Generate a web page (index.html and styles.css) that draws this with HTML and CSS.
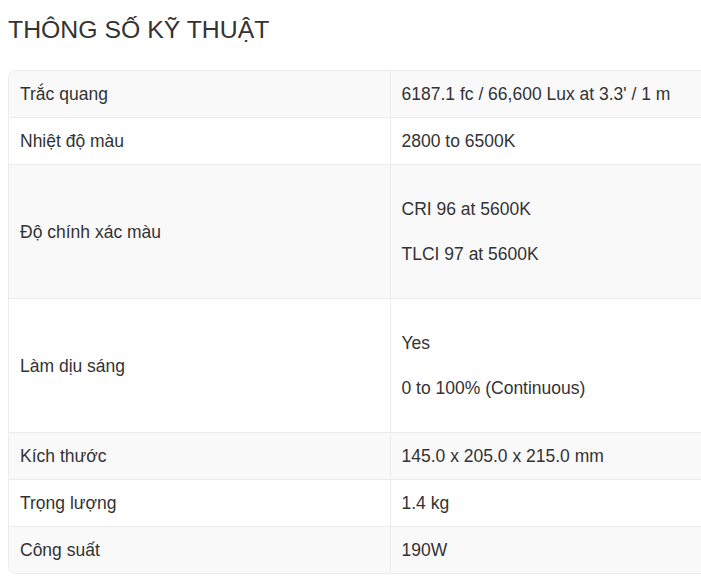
FILE: index.html
```html
<!DOCTYPE html>
<html lang="vi">
<head>
<meta charset="utf-8">
<link rel="stylesheet" href="styles.css">
</head>
<body>
<h2 class="title">THÔNG SỐ KỸ THUẬT</h2>
<table class="specs">
<tbody>
<tr><td>Trắc quang</td><td>6187.1 fc / 66,600 Lux at 3.3' / 1 m</td></tr>
<tr><td>Nhiệt độ màu</td><td>2800 to 6500K</td></tr>
<tr><td>Độ chính xác màu</td><td><p>CRI 96 at 5600K</p><p>TLCI 97 at 5600K</p></td></tr>
<tr><td>Làm dịu sáng</td><td><p>Yes</p><p>0 to 100% (Continuous)</p></td></tr>
<tr><td>Kích thước</td><td>145.0 x 205.0 x 215.0 mm</td></tr>
<tr><td>Trọng lượng</td><td>1.4 kg</td></tr>
<tr><td>Công suất</td><td>190W</td></tr>
</tbody>
</table>
</body>
</html>
```
FILE: styles.css
```css
html { overflow: hidden; }
body {
  margin: 0;
  padding: 16px 8px 0;
  font-family: "Liberation Sans", Arial, sans-serif;
  color: #333;
  background: #fff;
}
.title {
  margin: 0 0 26px;
  font-size: 24.8px;
  font-weight: normal;
  line-height: 28px;
  color: #333;
}
.specs {
  width: 764px;
  border-collapse: separate;
  border-spacing: 0;
  border: 1px solid #ececec;
  border-radius: 8px;
  font-size: 17.5px;
  line-height: 24px;
  table-layout: fixed;
}
.specs td {
  padding: 11px 11px;
  border-top: 1px solid #ececec;
  vertical-align: middle;
  width: 50%;
}
.specs tr:first-child td { border-top: none; }
.specs td + td { border-left: 1px solid #ececec; }
.specs tr:nth-child(odd) td { background: #f9f9fa; }
.specs tr:first-child td:first-child { border-top-left-radius: 8px; }
.specs tr:last-child td:first-child { border-bottom-left-radius: 8px; }
.specs p { margin: 21px 0; }
```
